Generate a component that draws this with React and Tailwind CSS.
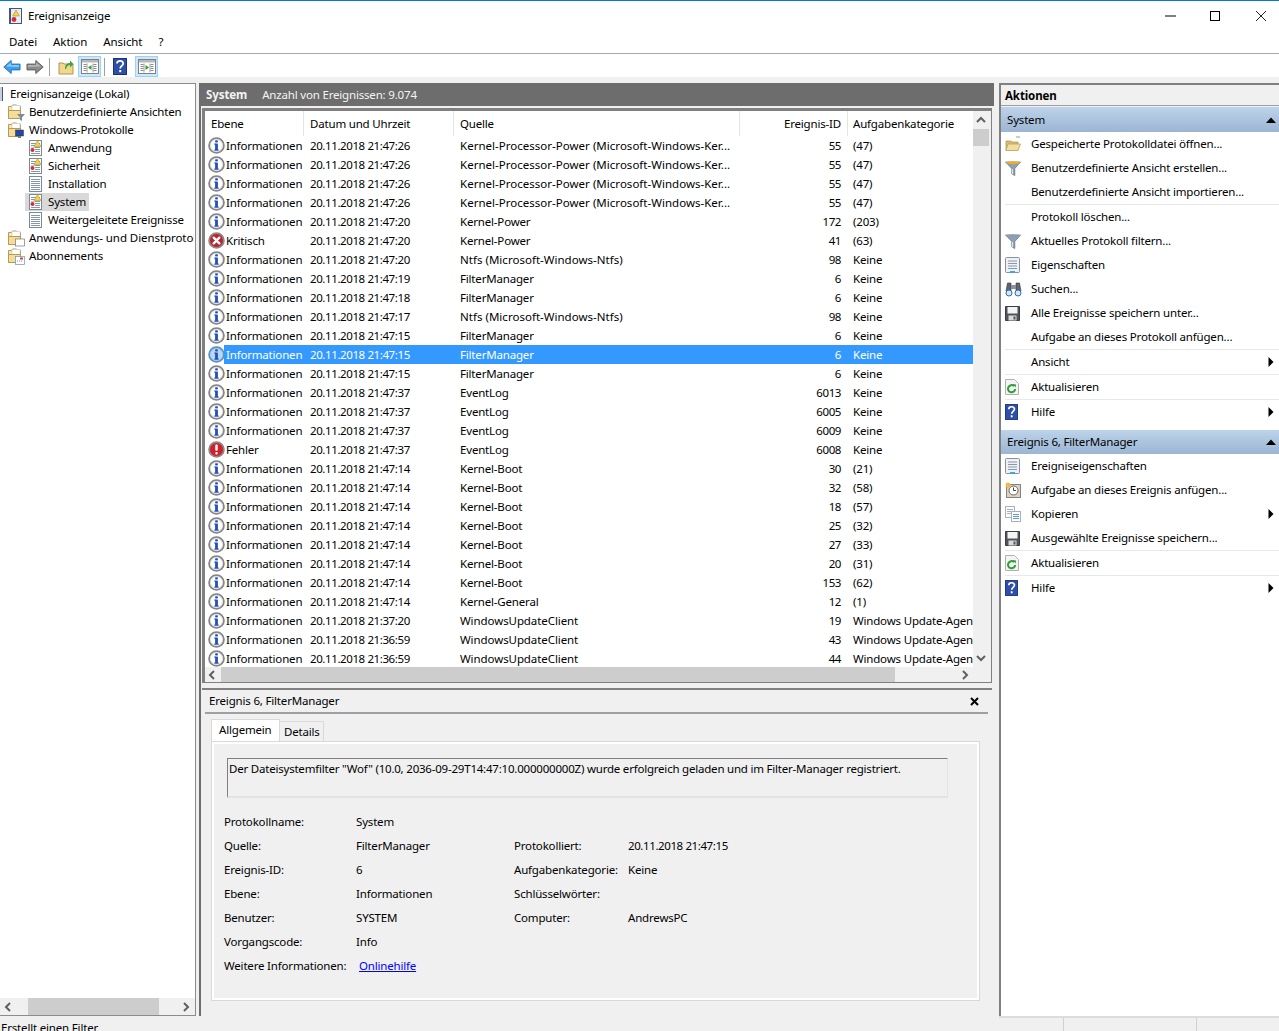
import React from "react";

const Info = ({ sel }) => (
  <svg width="17" height="17" viewBox="0 0 17 17" className="shrink-0">
    <circle cx="8.5" cy="8.5" r="7.4" fill={sel ? "#b9d8f7" : "#fff"} stroke={sel ? "#5a8fc6" : "#858585"} strokeWidth="1.8" />
    <circle cx="8.5" cy="8.5" r="6.1" fill="none" stroke={sel ? "#9cc6f0" : "#d8d8d8"} strokeWidth="0.8" />
    <rect x="7.1" y="3.2" width="2.8" height="2.4" rx="0.8" fill="#2450b8" />
    <rect x="7.1" y="6.6" width="2.8" height="6.8" fill="#2450b8" />
    <rect x="6.2" y="6.6" width="2" height="1" fill="#2450b8" />
    <rect x="6.2" y="12.6" width="4.6" height="1" fill="#2450b8" />
  </svg>
);
const Crit = () => (
  <svg width="17" height="17" viewBox="0 0 17 17" className="shrink-0">
    <circle cx="8.5" cy="8.5" r="7.4" fill="#c0222c" stroke="#8a8a8a" strokeWidth="1.8" />
    <path d="M5.7 5.7l5.6 5.6M11.3 5.7l-5.6 5.6" stroke="#fff" strokeWidth="2.4" strokeLinecap="round" />
  </svg>
);
const Err = () => (
  <svg width="17" height="17" viewBox="0 0 17 17" className="shrink-0">
    <circle cx="8.5" cy="8.5" r="7.4" fill="#d0202a" stroke="#8a8a8a" strokeWidth="1.8" />
    <rect x="7.3" y="3.6" width="2.4" height="6.2" rx="0.8" fill="#fff" />
    <rect x="7.3" y="11" width="2.4" height="2.4" rx="1" fill="#fff" />
  </svg>
);
const LogIcon = ({ alert }) => (
  <svg width="15" height="16" viewBox="0 0 15 16">
    <rect x="1.5" y="0.5" width="12" height="15" fill="#fff" stroke="#7a8a9c" />
    <path d="M3 3.5h9M3 5.5h9M3 7.5h9M3 9.5h9M3 11.5h9M3 13.5h9" stroke="#8497ad" />
    {alert && <path d="M9.5 0.5l3.5 6h-7z" fill="#f7d23e" stroke="#b8962a" strokeWidth="0.6" />}
    {alert && <rect x="2" y="7.5" width="5" height="5" fill="#fff" />}
    {alert && <circle cx="4.5" cy="10" r="2" fill="#d0303a" />}
  </svg>
);
const Folder = ({ children }) => (
  <svg width="17" height="17" viewBox="0 0 17 17">
    <path d="M0.5 2.5h3l1-1.5h4l1 1.5h3v12h-12z" fill="#f8e6b0" stroke="#b79a55" />
    <rect x="4" y="1.5" width="8" height="5" fill="#fff" stroke="#c8c8c8" strokeWidth="0.6" />
    <path d="M0.5 6.5h12v8h-12z" fill="#f5dc97" stroke="#b79a55" />
    {children}
  </svg>
);
const BackArrow = ({ dir, c1, c2, c3 }) => (
  <svg width="18" height="16" viewBox="0 0 18 16" style={{ transform: dir === "r" ? "scaleX(-1)" : undefined }}>
    <path d="M0.8 8l7.4-6.5v3.6h8.8v5.8H8.2v3.6z" fill={c1} stroke={c3} />
    <path d="M3 7.5L8 3.5v2.5h8v2" fill={c2} opacity="0.8" />
  </svg>
);
const PaneIcon = ({ right }) => (
  <svg width="18" height="15" viewBox="0 0 18 15">
    <rect x="0.5" y="0.5" width="17" height="14" fill="#fff" stroke="#808080" />
    <rect x="1" y="1" width="16" height="2.5" fill="#b8b8b8" />
    <path d="M2.5 5.5h3M2.5 7.5h3M2.5 9.5h3M2.5 11.5h3M12.5 5.5h3M12.5 7.5h3M12.5 9.5h3M12.5 11.5h3" stroke="#8a8a8a" />
    <path d="M6 4.5v9M12 4.5v9" stroke="#a0a0a0" />
    {right ? <path d="M7.5 6l3.5 2.5-3.5 2.5z" fill="#2aa02a" /> : <path d="M10.5 6L7 8.5l3.5 2.5z" fill="#2aa02a" />}
  </svg>
);
const HelpIcon = ({ w = 14, h = 17 }) => (
  <svg width={w} height={h} viewBox="0 0 14 17">
    <rect x="0.5" y="0.5" width="13" height="16" fill="#2e4fa8" stroke="#1c3278" />
    <path d="M4 5.6c0-3.6 6.2-3.6 6.2-0.2 0 2.4-3 2.6-3 5" fill="none" stroke="#fff" strokeWidth="1.8" />
    <rect x="6.2" y="12" width="2" height="2.2" fill="#fff" />
  </svg>
);
const FilterIcon = ({ top = "#8b9db2" }) => (
  <svg width="16" height="15" viewBox="0 0 16 15">
    <path d="M0.5 1h15L9.8 7.5v7l-3-1.6V7.5z" fill="#8fa0b2" stroke="#5d6d80" strokeWidth="0.7" />
    <ellipse cx="8" cy="1.8" rx="7" ry="1.5" fill={top} />
    <path d="M7 8v5l1 .5V8z" fill="#dfe6ee" />
  </svg>
);
const PropsIcon = () => (
  <svg width="15" height="16" viewBox="0 0 15 16">
    <rect x="0.5" y="0.5" width="14" height="15" rx="1" fill="#eef1f5" stroke="#8a9099" />
    <path d="M3 4h9M3 6.5h9M3 9h9M3 11.5h9" stroke="#8b98a8" />
    <rect x="5" y="14" width="5" height="2" fill="#39a9e6" />
  </svg>
);
const Binocs = () => (
  <svg width="17" height="16" viewBox="0 0 17 16">
    <path d="M1 10l1.5-8h3.5v8zM16 10l-1.5-8H11v8z" fill="#5e6670" stroke="#30363c" strokeWidth="0.6" />
    <rect x="6" y="4" width="5" height="4" fill="#89919b" />
    <circle cx="4" cy="12" r="3" fill="#d8e6f3" stroke="#2e6fb5" />
    <circle cx="13" cy="12" r="3" fill="#d8e6f3" stroke="#2e6fb5" />
  </svg>
);
const Save = () => (
  <svg width="15" height="15" viewBox="0 0 15 15">
    <path d="M0.5 0.5h14v14h-14z" fill="#50555c" stroke="#3a3d42" />
    <rect x="2.5" y="1" width="10" height="6.5" fill="#f4f4f4" />
    <rect x="3.5" y="9.5" width="8" height="5" fill="#d9d9d9" />
    <rect x="8.5" y="10.5" width="2" height="3" fill="#555" />
  </svg>
);
const Refresh = () => (
  <svg width="14" height="16" viewBox="0 0 14 16">
    <path d="M0.5 0.5h9l4 4v11h-13z" fill="#f4f4f4" stroke="#b0b0b0" />
    <path d="M10.2 10a3.6 3.6 0 1 1-1.2-3" fill="none" stroke="#2f9e35" strokeWidth="2" />
    <path d="M7.5 5l3.5 0.4-.4 3.2z" fill="#2f9e35" />
  </svg>
);
const OpenFolder = () => (
  <svg width="16" height="16" viewBox="0 0 16 16">
    <path d="M1 5h5l1 1h6v8H1z" fill="#d9bd76" stroke="#a98d4a" strokeWidth="0.7" />
    <path d="M3 8h12.5L13 14.5H0.8z" fill="#f3dd9c" stroke="#b39a56" strokeWidth="0.7" />
    <path d="M11 1h4" stroke="#58c558" />
  </svg>
);
const TaskIcon = () => (
  <svg width="16" height="16" viewBox="0 0 16 16">
    <rect x="1.5" y="2.5" width="14" height="13" fill="#d9d3c7" stroke="#8a8578" />
    <circle cx="8.5" cy="8.5" r="4.5" fill="#fff" stroke="#6d6a62" />
    <path d="M8.5 5.5v3h2.5" stroke="#444" fill="none" />
    <circle cx="3" cy="3" r="2.5" fill="#f7b93a" />
  </svg>
);
const CopyIcon = () => (
  <svg width="16" height="16" viewBox="0 0 16 16">
    <rect x="0.5" y="0.5" width="9" height="11" fill="#fff" stroke="#a8b2be" />
    <path d="M2 3.5h6M2 5.5h6M2 7.5h6" stroke="#9db3cc" />
    <rect x="6.5" y="5.5" width="9" height="10" fill="#fff" stroke="#a8b2be" />
    <path d="M8 8.5h6M8 10.5h6M8 12.5h6" stroke="#5f9bd4" />
  </svg>
);
const AppIcon = () => (
  <svg width="15" height="16" viewBox="0 0 15 16">
    <rect x="1.5" y="0.5" width="12" height="15" fill="#e8ecf4" stroke="#46537a" />
    <path d="M2 1v14" stroke="#46537a" strokeWidth="2" />
    <path d="M8 2l3.4 6H4.6z" fill="#f7d23e" stroke="#a38420" strokeWidth="0.5" />
    <circle cx="6" cy="11.5" r="2.4" fill="#d0303a" />
  </svg>
);
const Tri = () => (
  <svg width="6" height="10" viewBox="0 0 6 10"><path d="M0.5 0l5 5-5 5z" fill="#000" /></svg>
);
const UpTri = () => (
  <svg width="10" height="6" viewBox="0 0 10 6"><path d="M0 6l5-5.5L10 6z" fill="#000" /></svg>
);
const Chev = ({ d }) => {
  const p = { l: "M6 1L2 5l4 4", r: "M3 1l4 4-4 4", u: "M1 7l4-4 4 4", d: "M1 3l4 4 4-4" }[d];
  return (
    <svg width="10" height="10" viewBox="0 0 10 10">
      <path d={p} fill="none" stroke="#606060" strokeWidth="2" />
    </svg>
  );
};

const info = "Informationen";
const K = "Kernel-Processor-Power (Microsoft-Windows-Ker...";
const N = "Ntfs (Microsoft-Windows-Ntfs)";
const F = "FilterManager";
const E = "EventLog";
const B = "Kernel-Boot";
const W = "WindowsUpdateClient";
const A = "Windows Update-Agent";
const D = "20.11.2018 ";
const rows = [
  [info, "21:47:26", K, "55", "(47)"],
  [info, "21:47:26", K, "55", "(47)"],
  [info, "21:47:26", K, "55", "(47)"],
  [info, "21:47:26", K, "55", "(47)"],
  [info, "21:47:20", "Kernel-Power", "172", "(203)"],
  ["Kritisch", "21:47:20", "Kernel-Power", "41", "(63)"],
  [info, "21:47:20", N, "98", "Keine"],
  [info, "21:47:19", F, "6", "Keine"],
  [info, "21:47:18", F, "6", "Keine"],
  [info, "21:47:17", N, "98", "Keine"],
  [info, "21:47:15", F, "6", "Keine"],
  [info, "21:47:15", F, "6", "Keine"],
  [info, "21:47:15", F, "6", "Keine"],
  [info, "21:47:37", E, "6013", "Keine"],
  [info, "21:47:37", E, "6005", "Keine"],
  [info, "21:47:37", E, "6009", "Keine"],
  ["Fehler", "21:47:37", E, "6008", "Keine"],
  [info, "21:47:14", B, "30", "(21)"],
  [info, "21:47:14", B, "32", "(58)"],
  [info, "21:47:14", B, "18", "(57)"],
  [info, "21:47:14", B, "25", "(32)"],
  [info, "21:47:14", B, "27", "(33)"],
  [info, "21:47:14", B, "20", "(31)"],
  [info, "21:47:14", B, "153", "(62)"],
  [info, "21:47:14", "Kernel-General", "12", "(1)"],
  [info, "21:37:20", W, "19", A],
  [info, "21:36:59", W, "43", A],
  [info, "21:36:59", W, "44", A],
];

const Row = ({ r, sel }) => (
  <div className={`flex h-[19px] items-center whitespace-nowrap ${sel ? "text-white" : "text-black"}`}>
    <div className="w-[19px] pl-[3px] shrink-0 flex items-center">
      {r[0] === "Kritisch" ? <Crit /> : r[0] === "Fehler" ? <Err /> : <Info sel={sel} />}
    </div>
    <div className={`flex flex-1 h-full items-center ${sel ? "bg-[#3399ff]" : ""}`}>
      <div className="w-[79px] pl-[2px] shrink-0">{r[0]}</div>
      <div className="w-[150px] pl-[7px] shrink-0 tracking-[-0.4px]">{D + r[1]}</div>
      <div className={`w-[286px] pl-[7px] shrink-0 ${r[2] === K || r[2] === N ? "tracking-[0.02px]" : r[2] === W ? "tracking-[-0.08px]" : ""}`}>{r[2]}</div>
      <div className="w-[108px] pr-[6px] text-right shrink-0 tracking-[-0.4px]">{r[3]}</div>
      <div className="w-[126px] pl-[6px] shrink-0 overflow-hidden">{r[4]}</div>
    </div>
  </div>
);

const TreeRow = ({ icon, label, indent, sel, className = "" }) =>
  indent === 2 ? (
    <div className="flex h-[18px] items-center whitespace-nowrap pl-[25px]">
      <div className={`flex h-[18px] items-center pl-[2px] pr-[3px] ${sel ? "bg-[#d9d9d9]" : ""}`}>
        <div className="w-[16px] flex justify-center shrink-0">{icon}</div>
        <span className="ml-[5px] leading-[18px]">{label}</span>
      </div>
    </div>
  ) : (
    <div className="flex h-[18px] items-center whitespace-nowrap pl-[8px]">
      <div className="w-[17px] flex justify-center shrink-0">{icon}</div>
      <span className={`ml-[4px] leading-[18px] ${className}`}>{label}</span>
    </div>
  );

const Action = ({ icon, label, arrow }) => (
  <div className="flex h-[24px] items-center pl-[4px] whitespace-nowrap">
    <div className="w-[26px] flex items-center shrink-0">{icon}</div>
    <span className="flex-1">{label}</span>
    {arrow && <div className="pr-[5px] flex items-center"><Tri /></div>}
  </div>
);
const Sep = () => <div className="h-px bg-[#e8e8e8] ml-[4px]" />;
const Head = ({ label, tall }) => (
  <div className={`${tall ? "h-[25px]" : "h-[24px]"} flex items-center justify-between pl-[6px] pr-[3px] bg-gradient-to-b from-[#bdd3ea] to-[#9cb5d3]`}>
    <span>{label}</span>
    <UpTri />
  </div>
);

const Field = ({ children, className = "" }) => <div className={`h-[24px] leading-[24px] whitespace-nowrap ${className}`}>{children}</div>;

export default function App() {
  return (
    <div className="w-[1279px] h-[1031px] overflow-hidden flex flex-col bg-[#f0f0f0] text-[11.5px] tracking-[-0.18px] text-black font-['Noto_Sans',sans-serif]">
      <div className="h-px bg-[#0078d7] shrink-0" />
      {/* title bar */}
      <div className="h-[29px] bg-white flex items-center shrink-0 relative">
        <div className="ml-[8px] w-[15px] flex"><AppIcon /></div>
        <span className="ml-[5px] pt-[1px]">Ereignisanzeige</span>
        <div className="ml-auto flex items-center">
          <svg width="102" height="12" viewBox="0 0 102 12">
            <path d="M0 6h11" stroke="#000" strokeWidth="1" />
            <rect x="45.5" y="1.5" width="9" height="9" fill="none" stroke="#000" />
            <path d="M91 1l10 10M101 1L91 11" stroke="#222" strokeWidth="1" />
          </svg>
          <div className="w-[12px]" />
        </div>
      </div>
      {/* menu */}
      <div className="h-[23px] bg-white border-b border-[#a8a8b0] box-content flex items-center pl-[9px] gap-[16px] shrink-0 tracking-[-0.08px]">
        <span>Datei</span><span>Aktion</span><span>Ansicht</span><span>?</span>
      </div>
      {/* toolbar */}
      <div className="h-[23px] bg-white flex items-center shrink-0 pl-[3px] pt-[2px]">
        <BackArrow c1="#3f9ee8" c2="#9bd3f7" c3="#2076bd" />
        <div className="w-[5px]" />
        <BackArrow dir="r" c1="#8c8c8c" c2="#bdbdbd" c3="#5f5f5f" />
        <div className="w-px h-[18px] bg-[#a0a0a0] ml-[5px] mr-[8px]" />
        <svg width="16" height="17" viewBox="0 0 16 17">
          <path d="M1 5h4l1 1h9v10H1z" fill="#f2d88e" stroke="#b0954f" />
          <path d="M7 11c0-4 2-6 5-6V2.5l3.5 3.5-3.5 3.5V7c-2 0-3 1-4 4z" fill="#3fa244" />
        </svg>
        <div className="ml-[4px] w-[23px] h-[21px] bg-[#cce8ff] border border-[#99d1ff] flex items-center justify-center"><PaneIcon /></div>
        <div className="w-px h-[18px] bg-[#a0a0a0] ml-[3px] mr-[8px]" />
        <HelpIcon />
        <div className="ml-[8px] w-[23px] h-[21px] bg-[#cce8ff] border border-[#99d1ff] flex items-center justify-center"><PaneIcon right /></div>
      </div>
      <div className="h-[6px] shrink-0" />

      {/* main */}
      <div className="h-[933px] shrink-0 flex">
        {/* tree */}
        <div className="w-[196px] shrink-0 h-full bg-white border-r border-b border-t border-[#8c8c8c] flex flex-col overflow-hidden pt-[1px]">
          <div className="flex-1 overflow-hidden mr-[1px]">
            <div className="flex h-[18px] items-center whitespace-nowrap pl-0">
              <div className="w-[3px] h-[14px] bg-[#c9d0dc] border-r border-[#46537a] shrink-0" />
              <span className="ml-[7px]">Ereignisanzeige (Lokal)</span>
            </div>
            <TreeRow indent={1} label="Benutzerdefinierte Ansichten" icon={<Folder><path d="M9 10h8l-3 3.4V17l-2-1.2v-2.4z" fill="#7f8c9a" /></Folder>} />
            <TreeRow indent={1} label="Windows-Protokolle" icon={<Folder><rect x="7.5" y="8" width="8" height="6" fill="#1f4aa8" stroke="#333" strokeWidth="0.5" /><rect x="10" y="14" width="3" height="2" fill="#777" /></Folder>} />
            <TreeRow indent={2} label="Anwendung" icon={<LogIcon alert />} />
            <TreeRow indent={2} label="Sicherheit" icon={<LogIcon alert />} />
            <TreeRow indent={2} label="Installation" icon={<LogIcon />} />
            <TreeRow indent={2} label="System" icon={<LogIcon alert />} sel />
            <TreeRow indent={2} label="Weitergeleitete Ereignisse" icon={<LogIcon />} />
            <TreeRow indent={1} label="Anwendungs- und Dienstprotokolle" className="tracking-[-0.07px]" icon={<Folder><rect x="7.5" y="9" width="9" height="7" fill="#fff" stroke="#777" strokeWidth="0.7" /></Folder>} />
            <TreeRow indent={1} label="Abonnements" icon={<Folder><rect x="7.5" y="8.5" width="9" height="8" fill="#fff" stroke="#6f8fc0" strokeWidth="0.7" /><rect x="12" y="9.5" width="3" height="2" fill="#d04040" /><path d="M9 13h6" stroke="#6f8fc0" strokeDasharray="1 1" /></Folder>} />
          </div>
          <div className="h-[17px] shrink-0 flex items-center bg-[#f0f0f0]">
            <div className="w-[17px] flex justify-center"><Chev d="l" /></div>
            <div className="w-[131px] ml-[11px] h-full bg-[#cdcdcd]" />
            <div className="flex-1 flex justify-end pr-[4px]"><Chev d="r" /></div>
          </div>
        </div>

        {/* middle */}
        <div className="w-[795px] ml-[3px] shrink-0 h-full flex flex-col">
          <div className="h-[23px] shrink-0 bg-[#6d6d6d] text-[#f4f4f4] flex items-center pl-[7px]">
            <span className="font-bold tracking-[-0.1px]">System</span>
            <span className="ml-[15px]">Anzahl von Ereignissen: 9.074</span>
          </div>
          <div className="flex-1 min-h-0 flex flex-col border-l-[2px] border-[#6d6d6d]">
            {/* list */}
            <div className="mt-[2px] ml-[1px] w-[790px] h-[575px] shrink-0 border-[#808080] border-r border-b border-t-[3px] border-l-[3px] bg-[#f0f0f0] flex flex-col overflow-hidden">
              <div className="flex-1 min-h-0 flex">
                <div className="w-[768px] shrink-0 bg-white overflow-hidden">
                  <div className="h-[25px] flex whitespace-nowrap items-center">
                    <div className="w-[99px] pl-[6px] h-full flex items-center border-r border-[#e5e5e5] shrink-0">Ebene</div>
                    <div className="w-[150px] pl-[6px] h-full flex items-center border-r border-[#e5e5e5] shrink-0">Datum und Uhrzeit</div>
                    <div className="w-[286px] pl-[6px] h-full flex items-center border-r border-[#e5e5e5] shrink-0">Quelle</div>
                    <div className="w-[108px] pr-[6px] h-full flex items-center justify-end border-r border-[#e5e5e5] shrink-0">Ereignis-ID</div>
                    <div className="pl-[5px] h-full flex items-center">Aufgabenkategorie</div>
                  </div>
                  {rows.map((r, i) => <Row key={i} r={r} sel={i === 11} />)}
                </div>
                <div className="w-[16px] shrink-0 flex flex-col items-center">
                  <div className="h-[18px] flex items-center"><Chev d="u" /></div>
                  <div className="w-full h-[17px] bg-[#cdcdcd]" />
                  <div className="flex-1" />
                  <div className="h-[18px] flex items-center"><Chev d="d" /></div>
                </div>
              </div>
              <div className="h-[15px] shrink-0 flex items-center">
                <div className="w-[16px] flex justify-center"><Chev d="l" /></div>
                <div className="w-[674px] h-full bg-[#cdcdcd]" />
                <div className="w-[75px] flex justify-end"><Chev d="r" /></div>
              </div>
            </div>
            {/* detail */}
            <div className="mt-[5px] ml-[1px] w-[790px] flex-1 min-h-0 border-t-[2px] border-[#808080] flex flex-col">
              <div className="h-[22px] mx-[3px] shrink-0 flex items-center justify-between pl-[4px] pr-[10px]">
                <span>Ereignis 6, FilterManager</span>
                <svg width="9" height="9" viewBox="0 0 9 9"><path d="M1 1l7 7M8 1L1 8" stroke="#000" strokeWidth="2" /></svg>
              </div>
              <div className="h-[2px] bg-[#a0a0a0] mx-[3px] w-[783px] shrink-0" />
              <div className="flex mt-[5px] ml-[9px] items-end h-[22px] shrink-0">
                <div className="w-[69px] h-[22px] bg-white border border-[#d9d9d9] border-b-0 pl-[7px] leading-[20px]">Allgemein</div>
                <div className="w-[44px] h-[20px] bg-[#f0f0f0] border border-[#d9d9d9] border-l-0 border-b-0 pl-[4px] leading-[20px]">Details</div>
              </div>
              <div className="ml-[9px] w-[769px] h-[260px] shrink-0 border-[3px] border-white outline outline-1 outline-[#d9d9d9] -outline-offset-1 bg-[#f0f0f0] pl-[10px] pr-[30px] pt-[14px]">
                <div className="h-[40px] ml-[3px] border-t border-l border-[#808080] border-r border-b-2 border-r-[#e3e3e3] border-b-[#e3e3e3] pl-[1px] pt-[1px] whitespace-nowrap w-[721px] tracking-[-0.21px]">
                  Der Dateisystemfilter "Wof" (10.0, 2036-09-29T14:47:10.000000000Z) wurde erfolgreich geladen und im Filter-Manager registriert.
                </div>
                <div className="mt-[12px] grid grid-cols-[132px_158px_114px_1fr]">
                  <Field>Protokollname:</Field><Field className="col-span-3">System</Field>
                  <Field>Quelle:</Field><Field>FilterManager</Field><Field>Protokolliert:</Field><Field className="tracking-[-0.4px]">20.11.2018 21:47:15</Field>
                  <Field>Ereignis-ID:</Field><Field>6</Field><Field>Aufgabenkategorie:</Field><Field>Keine</Field>
                  <Field>Ebene:</Field><Field>Informationen</Field><Field>Schlüsselwörter:</Field><Field />
                  <Field>Benutzer:</Field><Field>SYSTEM</Field><Field>Computer:</Field><Field>AndrewsPC</Field>
                  <Field>Vorgangscode:</Field><Field className="col-span-3">Info</Field>
                  <Field>Weitere Informationen:</Field>
                  <Field className="col-span-3"><a className="ml-[3px] underline text-[#0000ff]">Onlinehilfe</a></Field>
                </div>
              </div>
            </div>
          </div>
        </div>

        {/* actions */}
        <div className="ml-[5px] flex-1 min-w-0 h-full flex flex-col border-l-[2px] border-t-[2px] border-[#808080] bg-white">
          <div className="h-[20px] shrink-0 bg-[#f0f0f0] flex items-center pl-[4px] pt-[1px] font-bold tracking-[-0.1px]">Aktionen</div>
          <div className="h-px bg-[#a0a0a0] shrink-0" />
          <div className="h-px bg-[#f0f0f0] shrink-0" />
          <div className="flex-1 min-h-0 flex flex-col">
            <Head label="System" tall />
            <Action icon={<OpenFolder />} label="Gespeicherte Protokolldatei öffnen..." />
            <Action icon={<FilterIcon top="#f4a82a" />} label="Benutzerdefinierte Ansicht erstellen..." />
            <Action label="Benutzerdefinierte Ansicht importieren..." />
            <Sep />
            <Action label="Protokoll löschen..." />
            <Action icon={<FilterIcon />} label="Aktuelles Protokoll filtern..." />
            <Action icon={<PropsIcon />} label="Eigenschaften" />
            <Action icon={<Binocs />} label="Suchen..." />
            <Action icon={<Save />} label="Alle Ereignisse speichern unter..." />
            <Action label="Aufgabe an dieses Protokoll anfügen..." />
            <Sep />
            <Action label="Ansicht" arrow />
            <Sep />
            <Action icon={<Refresh />} label="Aktualisieren" />
            <Sep />
            <Action icon={<HelpIcon w={13} h={16} />} label="Hilfe" arrow />
            <div className="h-[6px]" />
            <Head label="Ereignis 6, FilterManager" />
            <Action icon={<PropsIcon />} label="Ereigniseigenschaften" />
            <Action icon={<TaskIcon />} label="Aufgabe an dieses Ereignis anfügen..." />
            <Action icon={<CopyIcon />} label="Kopieren" arrow />
            <Action icon={<Save />} label="Ausgewählte Ereignisse speichern..." />
            <Sep />
            <Action icon={<Refresh />} label="Aktualisieren" />
            <Sep />
            <Action icon={<HelpIcon w={13} h={16} />} label="Hilfe" arrow />
          </div>
        </div>
      </div>

      {/* status */}
      <div className="flex-1 min-h-0 flex flex-col overflow-hidden">
        <div className="h-[1px]" />
        <div className="h-[2px] ml-[999px] bg-[#dcdcdc] shrink-0" />
        <div className="flex-1 flex relative">
          <div className="w-[1063px] pl-[1px] pt-[1px] leading-[18px] whitespace-nowrap">Erstellt einen Filter</div>
          <div className="w-[133px] border-l border-[#d0d0d0] h-full" />
          <div className="flex-1 border-l border-[#d0d0d0] h-full" />
        </div>
      </div>
    </div>
  );
}
